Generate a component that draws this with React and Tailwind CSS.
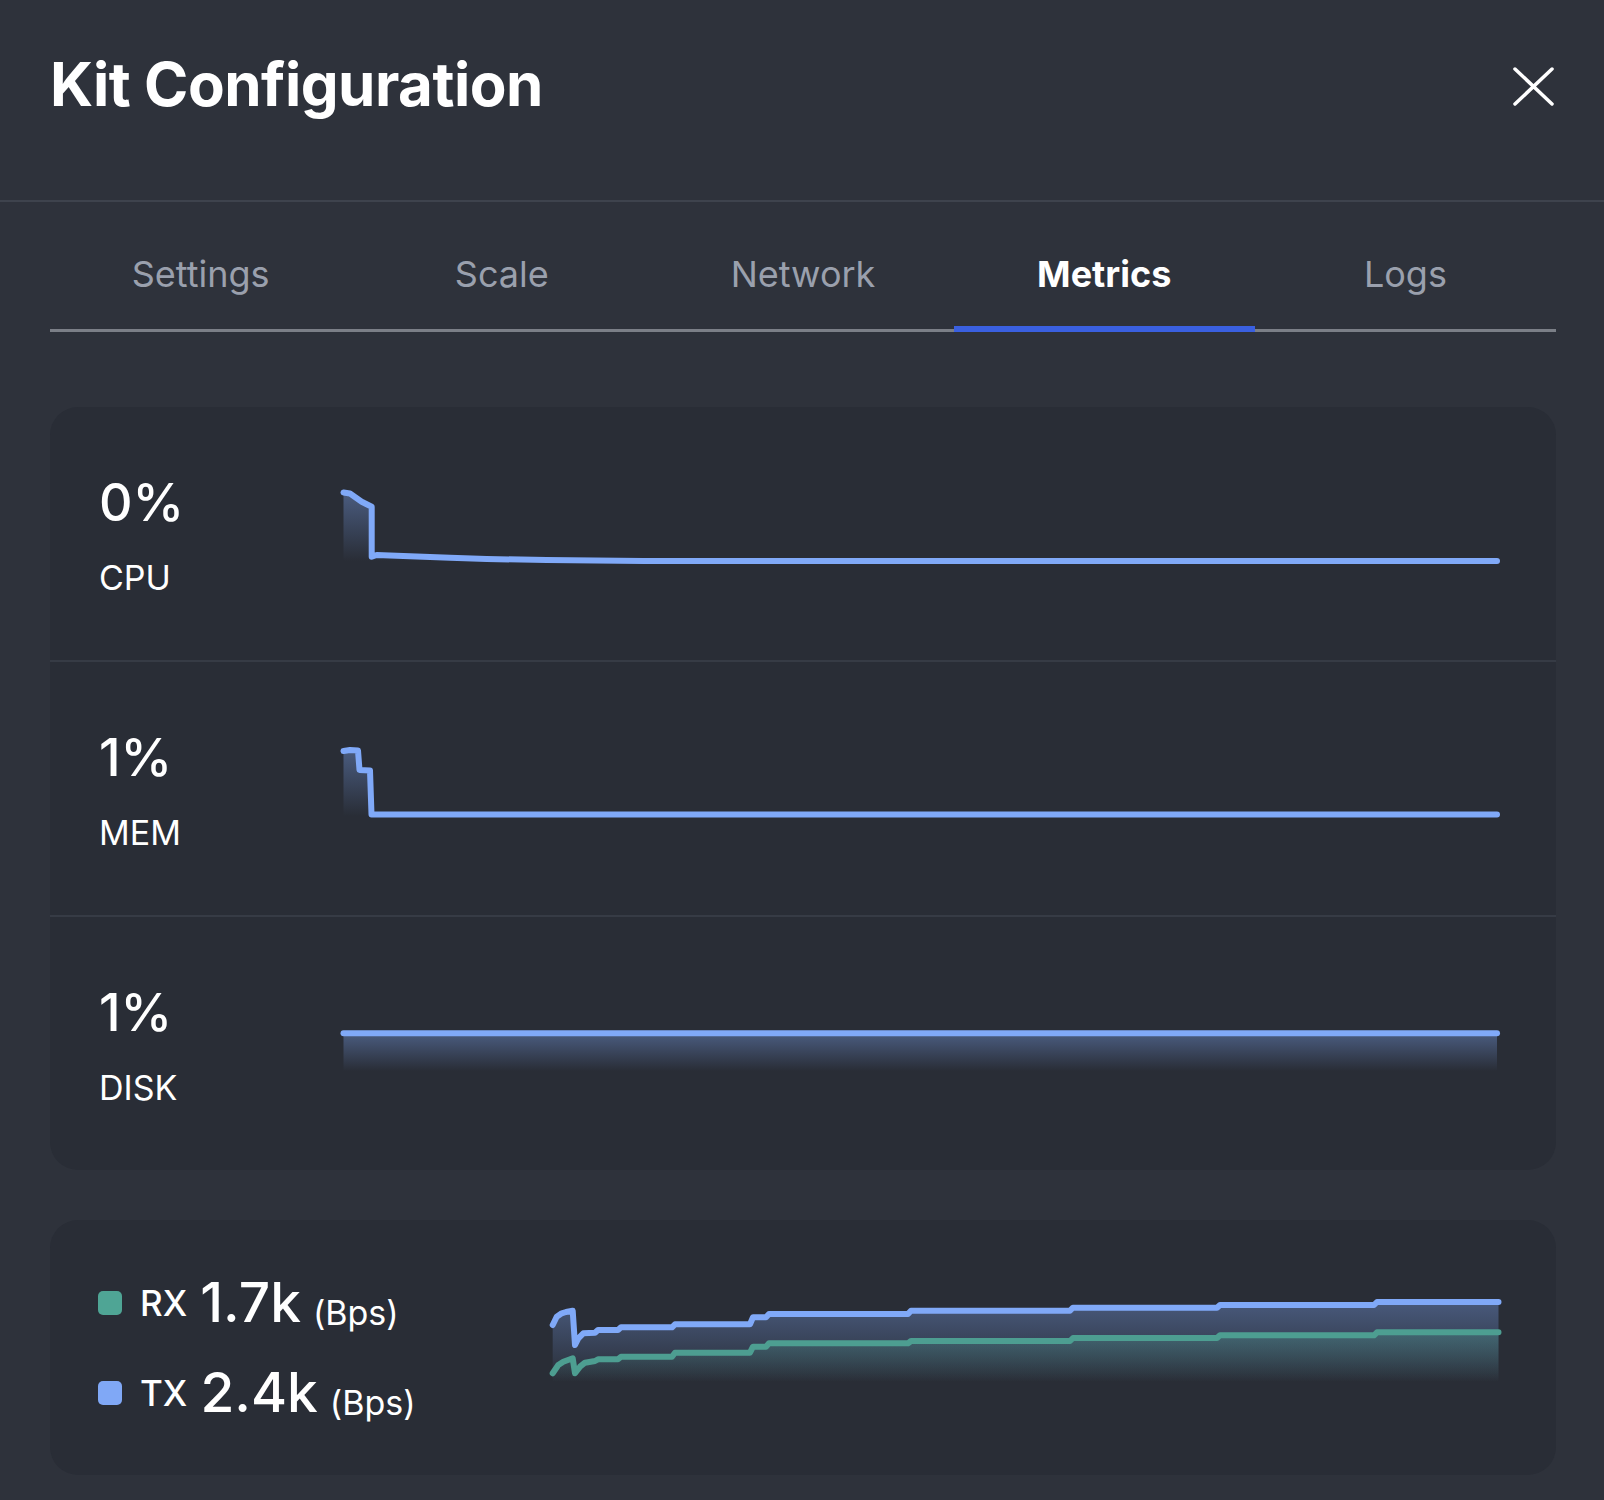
import { useState } from 'react'

const TABS = ['Settings', 'Scale', 'Network', 'Metrics', 'Logs']

const BLUE = '#80a9f8'
const TEAL = '#4d9e91'

// row-relative chart points, x from 340px, y from row top
const ROWS = [
  {
    value: '0%',
    label: 'CPU',
    pts: [[3.5, 85.5], [10, 86.5], [21.7, 94.7], [31.7, 99.7], [31.7, 149.7], [36.7, 148], [110, 150.7], [146.7, 152], [206.7, 153], [303.3, 154], [1157, 154]],
  },
  {
    value: '1%',
    label: 'MEM',
    pts: [[3.5, 89], [10, 88], [18, 88.5], [19.5, 108], [30, 108.5], [31.5, 152.5], [1157, 152.5]],
  },
  {
    value: '1%',
    label: 'DISK',
    pts: [[3.5, 116.3], [1157, 116.3]],
  },
]

const TX_PTS = [[4.7, 105], [8.7, 96.7], [13.7, 93.3], [18, 92], [24.7, 90.7], [27, 125], [30.3, 118.3], [35.3, 113.3], [47, 112.7], [50, 110], [70, 110], [73, 107.3], [124, 107.3], [127, 104.3], [202, 104.3], [205, 97.3], [218, 97.3], [221, 94], [360, 94], [363, 90.7], [522, 90.7], [525, 87.7], [669, 87.7], [672, 85], [826, 85], [829, 82], [950.5, 82]]

const RX_PTS = [[4.7, 153.3], [10.3, 145], [15.3, 141.7], [24.7, 138.3], [27, 153.3], [32, 146.7], [37, 142.7], [47, 141], [50, 139.3], [70, 139.3], [73, 136.7], [124, 136.7], [127, 132.7], [202, 132.7], [205, 126.7], [218, 126.7], [221, 123.3], [360, 123.3], [363, 121], [522, 121], [525, 118], [669, 118], [672, 115.3], [826, 115.3], [829, 112.3], [950.5, 112.3]]

const toLine = pts => pts.map((p, i) => `${i ? 'L' : 'M'}${p[0]} ${p[1]}`).join(' ')
const toArea = (pts, bottom) =>
  `${toLine(pts)} L${pts[pts.length - 1][0]} ${bottom} L${pts[0][0]} ${bottom} Z`

function UsageChart({ id, pts }) {
  return (
    <svg width="1162" height="253" className="shrink-0">
      <defs>
        <linearGradient id={id} x1="0" y1="0" x2="0" y2="1">
          <stop offset="0%" stopColor={BLUE} stopOpacity="0.38" />
          <stop offset="100%" stopColor={BLUE} stopOpacity="0" />
        </linearGradient>
      </defs>
      <path d={toArea(pts, 154)} fill={`url(#${id})`} />
      <path d={toLine(pts)} fill="none" stroke={BLUE} strokeWidth="6" strokeLinecap="round" strokeLinejoin="round" />
    </svg>
  )
}

function NetworkChart() {
  return (
    <svg width="956" height="255" className="shrink-0">
      <defs>
        <linearGradient id="txFill" x1="0" y1="0" x2="0" y2="1">
          <stop offset="0%" stopColor={BLUE} stopOpacity="0.36" />
          <stop offset="100%" stopColor={BLUE} stopOpacity="0" />
        </linearGradient>
        <linearGradient id="rxFill" x1="0" y1="0" x2="0" y2="1">
          <stop offset="0%" stopColor={TEAL} stopOpacity="0.35" />
          <stop offset="100%" stopColor={TEAL} stopOpacity="0" />
        </linearGradient>
      </defs>
      <path d={toArea(TX_PTS, 162)} fill="url(#txFill)" />
      <path d={toArea(RX_PTS, 162)} fill="url(#rxFill)" />
      <path d={toLine(RX_PTS)} fill="none" stroke={TEAL} strokeWidth="6" strokeLinecap="round" strokeLinejoin="round" />
      <path d={toLine(TX_PTS)} fill="none" stroke={BLUE} strokeWidth="6" strokeLinecap="round" strokeLinejoin="round" />
    </svg>
  )
}

function LegendRow({ color, label, value }) {
  return (
    <div className="flex items-baseline">
      <span className={`w-6 h-6 rounded-[5px] -translate-y-[7px] ${color}`} />
      <span className="ml-[18px] text-[35px] leading-none font-medium -translate-y-[6px]">{label}</span>
      <span className="ml-[13px] text-[55px] leading-none font-medium">{value}</span>
      <span className="ml-[12px] text-[34px] leading-none translate-y-[3px]">(Bps)</span>
    </div>
  )
}

export default function App() {
  const [tab, setTab] = useState('Metrics')

  return (
    <div className="min-h-screen bg-[#2e323b] text-white font-['Inter',sans-serif]">
      <header className="h-[202px] border-b-2 border-[#3e434d] flex items-start justify-between pl-[50px] pr-[50px] pt-[54px]">
        <h1 className="text-[60px] leading-none font-bold tracking-[-0.5px]">Kit Configuration</h1>
        <button className="mt-[13px]" aria-label="Close">
          <svg width="41" height="39" viewBox="0 0 41 39" fill="none" stroke="white" strokeWidth="3.5" strokeLinecap="round">
            <path d="M2 2 L39 37 M39 2 L2 37" />
          </svg>
        </button>
      </header>

      <nav className="ml-[50px] mr-[48px] mt-[54px] flex border-b-[3px] border-[#7b7f87]">
        {TABS.map(t => (
          <button
            key={t}
            onClick={() => setTab(t)}
            className={`relative flex-1 pb-[37px] text-[36px] leading-none ${
              t === tab ? 'font-bold text-white' : 'text-[#9aa0ad]'
            }`}
          >
            {t}
            {t === tab && <span className="absolute left-0 right-0 -bottom-[3px] h-[6px] bg-[#3a60e0]" />}
          </button>
        ))}
      </nav>

      <section className="ml-[50px] mr-[48px] mt-[75px] rounded-[28px] bg-[#292d36] divide-y-2 divide-[#363b45] overflow-hidden">
        {ROWS.map((r, i) => (
          <div key={r.label} className="flex pl-[49px]">
            <div className="w-[241px] h-[253px] pt-[70px]">
              <div className="text-[52px] leading-none font-medium">{r.value}</div>
              <div className="mt-[32px] text-[34px] leading-none">{r.label}</div>
            </div>
            <UsageChart id={`usage${i}`} pts={r.pts} />
          </div>
        ))}
      </section>

      <section className="ml-[50px] mr-[48px] mt-[50px] h-[255px] rounded-[28px] bg-[#292d36] flex pl-[48px]">
        <div className="w-[450px] pt-[55px] flex flex-col gap-[35px]">
          <LegendRow color="bg-[#4fa595]" label="RX" value="1.7k" />
          <LegendRow color="bg-[#80a8f6]" label="TX" value="2.4k" />
        </div>
        <NetworkChart />
      </section>
    </div>
  )
}
